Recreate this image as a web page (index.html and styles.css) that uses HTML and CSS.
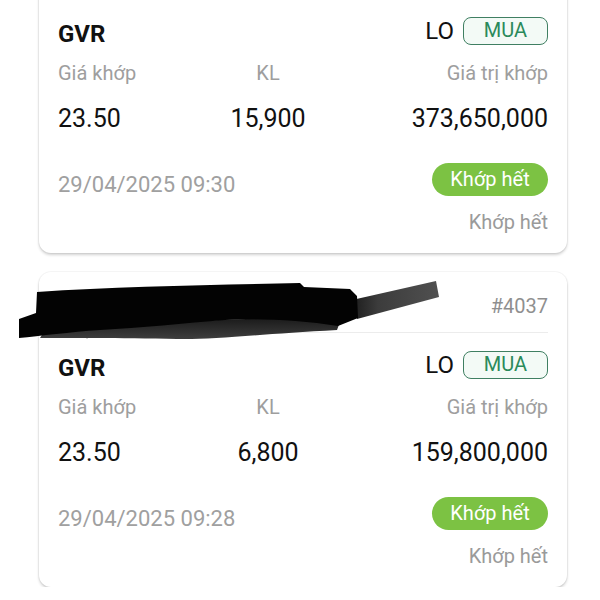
FILE: index.html
```html
<!DOCTYPE html>
<html lang="vi">
<head>
<meta charset="utf-8">
<link rel="stylesheet" href="styles.css">
</head>
<body>
<div class="list">
  <div class="card">
    <div class="card-head"></div>
    <div class="row-top">
      <span class="symbol">GVR</span>
      <span class="type">LO <span class="side">MUA</span></span>
    </div>
    <div class="grid labels">
      <span>Giá khớp</span><span class="c">KL</span><span class="r">Giá trị khớp</span>
    </div>
    <div class="grid values">
      <span>23.50</span><span class="c">15,900</span><span class="r">373,650,000</span>
    </div>
    <div class="row-bottom">
      <span class="date">29/04/2025 09:30</span>
      <div class="status">
        <span class="pill">Khớp hết</span>
        <span class="status-text">Khớp hết</span>
      </div>
    </div>
  </div>

  <div class="card">
    <div class="card-head"><span class="order-id">#4037</span></div>
    <svg class="scribble" viewBox="9 272 480 80" width="480" height="80" aria-hidden="true">
      <defs>
        <linearGradient id="tail" x1="0" y1="0" x2="1" y2="0">
          <stop offset="0" stop-color="#1c1c1c"/>
          <stop offset="0.3" stop-color="#3c3c3c"/>
          <stop offset="1" stop-color="#505050"/>
        </linearGradient>
        <linearGradient id="lip" x1="0" y1="0" x2="0" y2="1">
          <stop offset="0" stop-color="#1a1a1a"/>
          <stop offset="1" stop-color="#3e3e3e"/>
        </linearGradient>
      </defs>
      <path d="M352 300 L436 281 L439 297 L357 319 Z" fill="url(#tail)"/>
      <path d="M50 322 C140 326 220 318 300 318 L340 322 L337 330 C260 334 210 340 177 339 C120 338 60 338 40 338 Z" fill="url(#lip)"/>
      <path d="M37 292 C120 286 220 285 300 283 L304 287 L350 289 L357 296 L358 318 L338 326 C300 320 260 318 225 320 C185 323 140 328 100 330 C70 332 40 336 19 338 L19 319 L36 313 Z" fill="#030303"/>
    </svg>
    <div class="row-top">
      <span class="symbol">GVR</span>
      <span class="type">LO <span class="side">MUA</span></span>
    </div>
    <div class="grid labels">
      <span>Giá khớp</span><span class="c">KL</span><span class="r">Giá trị khớp</span>
    </div>
    <div class="grid values">
      <span>23.50</span><span class="c">6,800</span><span class="r">159,800,000</span>
    </div>
    <div class="row-bottom">
      <span class="date">29/04/2025 09:28</span>
      <div class="status">
        <span class="pill">Khớp hết</span>
        <span class="status-text">Khớp hết</span>
      </div>
    </div>
  </div>
</div>
</body>
</html>
```
FILE: styles.css
```css
* { box-sizing: border-box; }
html, body { margin: 0; padding: 0; background: #ffffff; }
body {
  font-family: Roboto, "Noto Sans", "Liberation Sans", sans-serif;
  color: #141414;
  overflow: hidden;
}
.list {
  margin-top: -62px;
  padding-left: 39px;
  display: flex;
  flex-direction: column;
  gap: 19px;
}
.card {
  position: relative;
  width: 528px;
  height: 315px;
  background: #fff;
  border-radius: 12px;
  padding: 0 19px 19px;
  box-shadow: 0 2px 3px rgba(0,0,0,0.18), 0 0 0 1px rgba(0,0,0,0.035);
}
.card-head {
  display: flex;
  justify-content: flex-end;
  padding-top: 22px;
  height: 61px;
  border-bottom: 1px solid #ececec;
}
.order-id {
  font-size: 20px;
  line-height: 24px;
  color: #8f8f8f;
}
.scribble {
  position: absolute;
  left: -30px;
  top: 0;
}
.row-top {
  display: flex;
  justify-content: space-between;
  align-items: center;
  margin-top: 18px;
  height: 28px;
}
.symbol {
  font-size: 24px;
  font-weight: 700;
  line-height: 28px;
  margin-top: 5px;
  color: #111;
}
.type {
  display: flex;
  align-items: center;
  gap: 9px;
  font-size: 24px;
  line-height: 28px;
  color: #111;
}
.side {
  display: inline-block;
  width: 85px;
  height: 28px;
  border: 1.5px solid #3f7f62;
  border-radius: 8px;
  background: #f3faf6;
  color: #2b8a5b;
  font-size: 20px;
  line-height: 25px;
  text-align: center;
}
.grid {
  display: grid;
  grid-template-columns: 2fr 2fr 3fr;
}
.grid .c { text-align: center; }
.grid .r { text-align: right; }
.labels {
  margin-top: 16px;
  font-size: 20px;
  line-height: 24px;
  color: #9e9e9e;
}
.values {
  margin-top: 19px;
  font-size: 25px;
  line-height: 30px;
  color: #111;
}
.row-bottom {
  display: flex;
  justify-content: space-between;
  align-items: flex-start;
  margin-top: 29px;
}
.date {
  margin-top: 10px;
  font-size: 22px;
  line-height: 24px;
  color: #a0a0a0;
}
.status {
  display: flex;
  flex-direction: column;
  align-items: flex-end;
  gap: 14px;
}
.pill {
  display: block;
  width: 116px;
  height: 33px;
  border-radius: 17px;
  background: #7cc243;
  color: #fff;
  font-size: 20px;
  line-height: 33px;
  text-align: center;
}
.status-text {
  font-size: 20px;
  line-height: 24px;
  color: #9a9a9a;
}
```
